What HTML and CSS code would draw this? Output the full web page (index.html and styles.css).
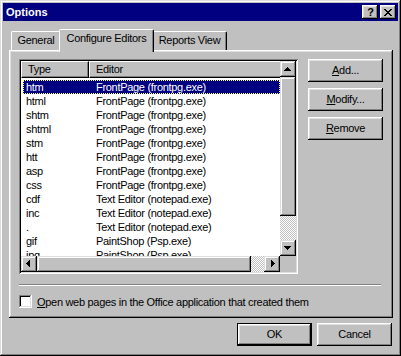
FILE: index.html
```html
<!DOCTYPE html>
<html>
<head>
<meta charset="utf-8">
<link rel="stylesheet" href="styles.css">
</head>
<body>
<div class="window">
  <div class="titlebar">
    <span class="title">Options</span>
    <div class="tbtns">
      <span class="tbtn help">?</span>
      <span class="tbtn close"><svg width="8" height="7" viewBox="0 0 8 7" shape-rendering="crispEdges"><path fill="#000" d="M0 0h2v1H0zM6 0h2v1H6zM1 1h2v1H1zM5 1h2v1H5zM2 2h4v1H2zM3 3h2v1H3zM2 4h4v1H2zM1 5h2v1H1zM5 5h2v1H5zM0 6h2v1H0zM6 6h2v1H6z"/></svg></span>
    </div>
  </div>
  <div class="client">
    <div class="tabs">
      <div class="tab general">General</div>
      <div class="tab sel">Configure Editors</div>
      <div class="tab reports">Reports View</div>
    </div>
    <div class="panel">
      <div class="main">
        <div class="list">
          <div class="view">
            <div class="header">
              <div class="hcell htype">Type</div>
              <div class="hcell heditor">Editor</div>
            </div>
            <div class="rows">
              <div class="row sel"><span class="t">htm</span><span>FrontPage (frontpg.exe)</span></div>
              <div class="row"><span class="t">html</span><span>FrontPage (frontpg.exe)</span></div>
              <div class="row"><span class="t">shtm</span><span>FrontPage (frontpg.exe)</span></div>
              <div class="row"><span class="t">shtml</span><span>FrontPage (frontpg.exe)</span></div>
              <div class="row"><span class="t">stm</span><span>FrontPage (frontpg.exe)</span></div>
              <div class="row"><span class="t">htt</span><span>FrontPage (frontpg.exe)</span></div>
              <div class="row"><span class="t">asp</span><span>FrontPage (frontpg.exe)</span></div>
              <div class="row"><span class="t">css</span><span>FrontPage (frontpg.exe)</span></div>
              <div class="row"><span class="t">cdf</span><span>Text Editor (notepad.exe)</span></div>
              <div class="row"><span class="t">inc</span><span>Text Editor (notepad.exe)</span></div>
              <div class="row"><span class="t">.</span><span>Text Editor (notepad.exe)</span></div>
              <div class="row"><span class="t">gif</span><span>PaintShop (Psp.exe)</span></div>
              <div class="row"><span class="t">jpg</span><span>PaintShop (Psp.exe)</span></div>
            </div>
          </div>
          <div class="vscroll">
            <div class="sbtn"><svg width="16" height="16" viewBox="0 0 16 16" shape-rendering="crispEdges"><path d="M7 6h1v1h1v1h1v1h1v1H4V9h1V8h1V7h1z"/></svg></div>
            <div class="thumb-v raised"></div>
            <div class="track"></div>
            <div class="sbtn"><svg width="16" height="16" viewBox="0 0 16 16" shape-rendering="crispEdges"><path d="M4 6h7v1h-1v1H9v1H8v1H7V9H6V8H5V7H4z"/></svg></div>
          </div>
          <div class="hscroll">
            <div class="sbtn"><svg width="16" height="16" viewBox="0 0 16 16" shape-rendering="crispEdges"><path d="M5 7h1V6h1V5h1V4h1v7H8v-1H7V9H6V8H5z"/></svg></div>
            <div class="thumb-h raised"></div>
            <div class="track"></div>
            <div class="sbtn"><svg width="16" height="16" viewBox="0 0 16 16" shape-rendering="crispEdges"><path d="M7 4h1v1h1v1h1v1h1v1h-1v1H9v1H8v1H7z"/></svg></div>
          </div>
          <div class="corner"></div>
        </div>
        <div class="side">
          <div class="btn"><span><u>A</u>dd...</span></div>
          <div class="btn"><span><u>M</u>odify...</span></div>
          <div class="btn"><span><u>R</u>emove</span></div>
        </div>
      </div>
      <div class="sep"></div>
      <div class="check">
        <span class="box"></span>
        <span><u>O</u>pen web pages in the Office application that created them</span>
      </div>
    </div>
    <div class="footer">
      <div class="btn default"><span>OK</span></div>
      <div class="btn"><span>Cancel</span></div>
    </div>
  </div>
</div>
</body>
</html>
```
FILE: styles.css
```css
html, body {
  margin: 0;
  padding: 0;
  background: #c0c0c0;
}
body {
  font-family: "Liberation Sans", Arial, sans-serif;
  font-size: 11px;
  letter-spacing: -0.3px;
  color: #000;
}
u { text-decoration: underline; text-underline-offset: 1px; }

.window {
  width: 401px;
  height: 356px;
  box-sizing: border-box;
  padding: 3px;
  background: #c0c0c0;
  box-shadow: inset -1px -1px #000, inset 1px 1px #dfdfdf, inset -2px -2px #808080, inset 2px 2px #fff;
  display: flex;
  flex-direction: column;
}

.titlebar {
  height: 18px;
  flex: none;
  background: #000080;
  color: #fff;
  display: flex;
  align-items: center;
  justify-content: space-between;
  padding: 0 2px 0 3px;
}
.title {
  font-weight: bold;
  letter-spacing: 0;
  line-height: 18px;
}
.tbtns {
  display: flex;
  gap: 2px;
}
.tbtn {
  width: 16px;
  height: 14px;
  box-sizing: border-box;
  background: #c0c0c0;
  box-shadow: inset -1px -1px #000, inset 1px 1px #fff, inset -2px -2px #808080, inset 2px 2px #dfdfdf;
  display: flex;
  align-items: center;
  justify-content: center;
  color: #000;
  font-weight: bold;
  letter-spacing: 0;
  line-height: 14px;
}
.tbtn.help { padding-left: 1px; }
.tbtn.close svg { display: block; margin-top: 0px; }

.client {
  padding: 8px 5px 0 6px;
  display: flex;
  flex-direction: column;
}

.tabs {
  display: flex;
  align-items: flex-end;
  height: 21px;
  padding-left: 2px;
}
.tab {
  height: 19px;
  box-sizing: border-box;
  background: #c0c0c0;
  border-top: 1px solid #fff;
  border-left: 1px solid #fff;
  border-right: 1px solid #000;
  border-radius: 2px 2px 0 0;
  box-shadow: inset -1px 0 #808080;
  text-align: center;
  line-height: 14px;
  padding-top: 1px;
  white-space: nowrap;
}
.tab.general { width: 50px; }
.tab.reports { width: 75px; }
.tab.sel {
  width: 95px;
  height: 23px;
  margin: 0 -2px -2px -2px;
  position: relative;
  z-index: 1;
  padding-top: 1px;
}

.panel {
  height: 268px;
  box-sizing: border-box;
  padding: 9px 10px 10px 10px;
  background: #c0c0c0;
  box-shadow: inset -1px -1px #000, inset 1px 1px #fff, inset -2px -2px #808080, inset 2px 2px #dfdfdf;
  display: flex;
  flex-direction: column;
}

.main {
  display: flex;
  gap: 10px;
}

.list {
  width: 279px;
  height: 215px;
  box-sizing: border-box;
  padding: 2px;
  background: #fff;
  box-shadow: inset 1px 1px #808080, inset -1px -1px #fff, inset 2px 2px #000, inset -2px -2px #dfdfdf;
  display: grid;
  grid-template-columns: 259px 16px;
  grid-template-rows: 195px 16px;
}
.view {
  overflow: hidden;
  background: #fff;
  display: flex;
  flex-direction: column;
}
.header {
  display: flex;
  height: 17px;
  flex: none;
}
.hcell {
  box-sizing: border-box;
  height: 17px;
  line-height: 14px;
  padding-left: 6px;
  background: #c0c0c0;
  border-top: 1px solid #fff;
  border-left: 1px solid #fff;
  border-right: 1px solid #000;
  border-bottom: 1px solid #000;
  box-shadow: inset -1px -1px #808080;
  flex: none;
  white-space: nowrap;
}
.htype { width: 68px; }
.heditor { width: 240px; }

.rows {
  padding-top: 2px;
}
.row {
  display: flex;
  height: 14px;
  line-height: 14px;
  margin-left: 2px;
  white-space: nowrap;
}
.row .t {
  width: 73px;
  flex: none;
  box-sizing: border-box;
  padding-left: 3px;
}
.row.sel {
  background: #000080;
  color: #fff;
  outline: 1px dotted #ffff80;
  outline-offset: -1px;
}

.raised, .sbtn {
  background: #c0c0c0;
  box-shadow: inset -1px -1px #000, inset 1px 1px #dfdfdf, inset -2px -2px #808080, inset 2px 2px #fff;
}
.sbtn {
  width: 16px;
  height: 16px;
  flex: none;
}
.sbtn svg { display: block; }
.vscroll {
  display: flex;
  flex-direction: column;
}
.thumb-v {
  height: 139px;
  flex: none;
}
.hscroll {
  display: flex;
}
.thumb-h {
  width: 214px;
  flex: none;
}
.track {
  flex: 1;
  background-color: #c0c0c0;
  background-image: conic-gradient(#fff 0 25%, transparent 0 50%, #fff 0 75%, transparent 0);
  background-size: 2px 2px;
}
.corner {
  background: #c0c0c0;
}

.side {
  display: flex;
  flex-direction: column;
  gap: 6px;
  width: 75px;
  flex: none;
}
.btn {
  width: 75px;
  height: 23px;
  box-sizing: border-box;
  background: #c0c0c0;
  box-shadow: inset -1px -1px #000, inset 1px 1px #fff, inset -2px -2px #808080, inset 2px 2px #dfdfdf;
  display: flex;
  align-items: center;
  justify-content: center;
  line-height: 14px;
  padding-bottom: 1px;
}
.btn.default {
  border: 1px solid #000;
  box-shadow: inset -1px -1px #000, inset 1px 1px #fff, inset -2px -2px #808080, inset 2px 2px #dfdfdf;
}

.sep {
  margin-top: 10px;
  width: 362px;
  height: 2px;
  box-sizing: border-box;
  border-top: 1px solid #808080;
  border-bottom: 1px solid #fff;
}

.check {
  margin-top: 9px;
  display: flex;
  align-items: center;
  gap: 5px;
  height: 13px;
  line-height: 14px;
  white-space: nowrap;
}
.box {
  width: 13px;
  height: 13px;
  flex: none;
  box-sizing: border-box;
  background: #fff;
  box-shadow: inset -1px -1px #fff, inset 1px 1px #808080, inset -2px -2px #dfdfdf, inset 2px 2px #000;
}

.footer {
  display: flex;
  justify-content: flex-end;
  gap: 5px;
  margin-top: 5px;
  padding-right: 1px;
}
```
